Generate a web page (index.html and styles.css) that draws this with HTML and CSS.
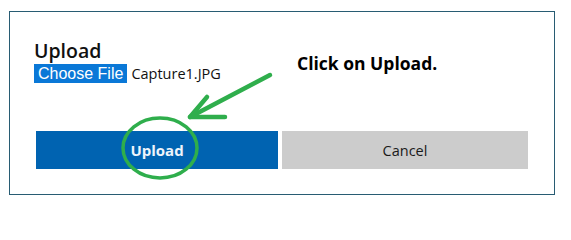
FILE: index.html
```html
<!DOCTYPE html>
<html>
<head>
<meta charset="utf-8">
<link rel="stylesheet" href="styles.css">
</head>
<body>
<div class="page">
  <div class="dialog">
    <div class="title">Upload</div>
    <div class="file-row">
      <span class="choose">Choose File</span>
      <span class="filename">Capture1.JPG</span>
    </div>
    <div class="actions">
      <button class="btn btn-primary">Upload</button>
      <button class="btn btn-secondary">Cancel</button>
    </div>
  </div>
  <div class="note">Click on Upload.</div>
  <svg class="marks" width="571" height="216" viewBox="0 0 571 216">
    <g fill="none" stroke="#2fae4c" stroke-linecap="round" stroke-linejoin="round">
      <path d="M270 75 L190 117" stroke-width="4.5"/>
      <path d="M207 97 L190 117 L225 117" stroke-width="4.5"/>
      <ellipse cx="160" cy="148" rx="37" ry="30" stroke-width="3.5"/>
    </g>
  </svg>
</div>
</body>
</html>
```
FILE: styles.css
```css
html, body {
  margin: 0;
  padding: 0;
  background: #ffffff;
}
.page {
  position: relative;
  width: 571px;
  height: 216px;
  overflow: hidden;
  padding-top: 11px;
  box-sizing: border-box;
}
.dialog {
  margin-left: 9px;
  width: 546px;
  height: 184px;
  box-sizing: border-box;
  border: 1px solid #285c73;
  padding: 26px 25px 0 23px;
}
.title {
  font-family: "Open Sans", sans-serif;
  font-size: 19.5px;
  font-weight: 600;
  line-height: 24px;
  color: #111111;
  padding-left: 1px;
  padding-top: 1px;
  height: 23px;
}
.file-row {
  display: flex;
  align-items: center;
  margin-top: 2px;
  height: 19px;
}
.choose {
  background: #0a78d7;
  color: #ffffff;
  font-family: "Liberation Sans", Arial, sans-serif;
  font-size: 16px;
  line-height: 19px;
  height: 19px;
  padding: 0 4px;
  margin-left: 1px;
}
.filename {
  font-family: "Open Sans", sans-serif;
  font-size: 14.5px;
  color: #111111;
  margin-left: 4px;
  line-height: 19px;
}
.actions {
  display: flex;
  gap: 4px;
  margin-top: 48px;
  margin-left: 3px;
}
.btn {
  border: none;
  height: 38px;
  font-family: "Open Sans", sans-serif;
  font-size: 15px;
  padding: 0;
}
.btn-primary {
  width: 242px;
  background: #0063b1;
  color: #eef4fb;
  font-weight: bold;
}
.btn-secondary {
  width: 246px;
  background: #cccccc;
  color: #1a1a1a;
  font-size: 14.5px;
}
.note {
  position: absolute;
  left: 297px;
  top: 51px;
  font-family: "Open Sans", sans-serif;
  font-weight: bold;
  font-size: 17.5px;
  color: #000000;
}
.marks {
  position: absolute;
  left: 0;
  top: 0;
}
```
